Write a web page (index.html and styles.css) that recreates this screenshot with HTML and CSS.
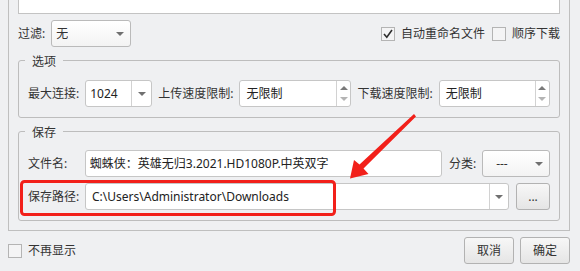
FILE: index.html
```html
<!DOCTYPE html>
<html lang="zh-CN">
<head>
<meta charset="utf-8">
<title>下载设置</title>
<link rel="stylesheet" href="styles.css">
</head>
<body>
<div class="frame">
  <div class="textarea"></div>
  <div class="filter-row">
    <span class="lbl">过滤:</span>
    <div class="select sel-filter"><span class="val">无</span><i class="caret"></i></div>
    <div class="spacer"></div>
    <label class="check"><span class="box"><svg width="12" height="12" viewBox="0 0 12 12"><polyline points="2,6 4.8,9.2 10,2" fill="none" stroke="#2e2e2e" stroke-width="1.6"/></svg></span><span class="lbl">自动重命名文件</span></label>
    <label class="check"><span class="box"></span><span class="lbl">顺序下载</span></label>
  </div>

  <fieldset class="group">
    <legend>选项</legend>
    <div class="row">
      <span class="lbl gap-r">最大连接:</span>
      <div class="combo c-max"><span class="val">1024</span><span class="drop"><i class="caret"></i></span></div>
      <span class="lbl gap-r">上传速度限制:</span>
      <div class="spin s-up"><span class="val">无限制</span><span class="btns"><i class="up"></i><i class="down"></i></span></div>
      <span class="lbl gap-r">下载速度限制:</span>
      <div class="spin s-down"><span class="val">无限制</span><span class="btns"><i class="up"></i><i class="down"></i></span></div>
    </div>
  </fieldset>

  <fieldset class="group g-save">
    <legend>保存</legend>
    <div class="row">
      <span class="lbl fixed">文件名:</span>
      <div class="input i-name"><span class="val">蜘蛛侠：英雄无归3.2021.HD1080P.中英双字</span></div>
      <span class="lbl gap-r">分类:</span>
      <div class="select sel-cat"><span class="val">---</span><i class="caret"></i></div>
    </div>
    <div class="row row2">
      <span class="lbl fixed">保存路径:</span>
      <div class="combo c-path"><span class="val">C:\Users\Administrator\Downloads</span><span class="drop"><i class="caret"></i></span></div>
      <button class="btn btn-dots">...</button>
    </div>
  </fieldset>
</div>

<div class="footer">
  <label class="check"><span class="box"></span><span class="lbl">不再显示</span></label>
  <div class="spacer"></div>
  <button class="btn btn-act">取消</button>
  <button class="btn btn-act">确定</button>
</div>

<svg class="annot" width="580" height="271" viewBox="0 0 580 271">
  <rect x="21.5" y="181.5" width="313" height="33" rx="3" fill="none" stroke="#f2201a" stroke-width="3"/>
  <polygon points="414,114 416,116.5 363.5,168.5 368.5,174 350,178.5 354,160 359.5,164.5" fill="#f2201a"/>
</svg>
</body>
</html>
```

FILE: styles.css
```css
* { box-sizing: border-box; }
html, body { margin: 0; padding: 0; }
body {
  width: 580px;
  height: 271px;
  overflow: hidden;
  position: relative;
  background: #eff0f2;
  font-family: "Noto Sans", "Noto Sans CJK SC", sans-serif;
  font-size: 12px;
  color: #333;
}

.frame {
  margin: 0 10px 0 8px;
  border: 1px solid #bfbfbf;
  border-top: none;
  padding: 0 9px 9px;
}

.textarea {
  height: 14px;
  background: #fff;
  border: 1px solid #c3c3c3;
  border-top: none;
}

.lbl { line-height: 16px; white-space: nowrap; }
.gap-r { margin-right: 6px; }
.fixed { width: 57px; }
.spacer { flex: 1; }
.val { line-height: 16px; white-space: nowrap; overflow: hidden; }

.filter-row {
  display: flex;
  align-items: center;
  height: 27px;
  margin-top: 6px;
}
.filter-row > .lbl:first-child { margin-right: 6px; }

.check { display: flex; align-items: center; }
.check .box {
  width: 14px;
  height: 14px;
  border: 1px solid #b4b4b4;
  background: #f4f4f5;
  display: flex;
  align-items: center;
  justify-content: center;
  margin-right: 6px;
}
.filter-row .check + .check { margin-left: 7px; }

.caret {
  display: block;
  width: 0;
  height: 0;
  border-left: 4px solid transparent;
  border-right: 4px solid transparent;
  border-top: 4px solid #707070;
}

.select {
  height: 27px;
  border: 1px solid #bababa;
  border-radius: 3px;
  background: linear-gradient(#ffffff, #f3f3f3);
  display: flex;
  align-items: center;
  justify-content: space-between;
  padding: 0 6px 0 4px;
}
.sel-filter { width: 80px; }
.sel-cat { width: 68px; padding-left: 13px; }

.group {
  margin: 3px 0 0;
  border: 1px solid #bdbdbd;
  border-radius: 3px;
  padding: 10px 9px 10px;
  min-width: 0;
}
.group legend {
  margin-left: -3px;
  padding: 4px 7px 0;
  line-height: 16px;
}
.g-save { padding-top: 9px; }

.row {
  display: flex;
  align-items: center;
  height: 27px;
}
.row2 { margin-top: 6px; }

.combo, .spin, .input {
  height: 27px;
  border: 1px solid #c6c6c6;
  border-radius: 3px;
  background: #fff;
  display: flex;
  align-items: stretch;
  color: #222;
}
.combo .val, .spin .val, .input .val {
  flex: 1;
  display: flex;
  align-items: center;
  padding-left: 4px;
}
.combo .drop {
  width: 20px;
  border-left: 1px solid #d2d2d2;
  display: flex;
  align-items: center;
  justify-content: center;
}
.c-max { width: 67px; margin-right: 6px; }
.c-path { width: 424px; }
.c-path .val { padding-left: 6px; }
.c-path .drop { width: 19px; }

.spin { width: 112px; margin-right: 6px; }
.spin .val { padding-left: 6px; }
.spin .btns {
  width: 14px;
  border-left: 1px solid #d2d2d2;
  display: flex;
  flex-direction: column;
  align-items: center;
  justify-content: center;
  gap: 7px;
}
.spin .up {
  display: block;
  width: 0; height: 0;
  border-left: 4px solid transparent;
  border-right: 4px solid transparent;
  border-bottom: 4px solid #7a7a7a;
}
.spin .down {
  display: block;
  width: 0; height: 0;
  border-left: 4px solid transparent;
  border-right: 4px solid transparent;
  border-top: 4px solid #b4b4b4;
}
.s-down { width: 111px; margin-right: 0; }

.i-name { width: 358px; margin-right: 7px; }

.btn {
  font: inherit;
  color: #333;
  height: 27px;
  border: 1px solid #b2b2b2;
  border-radius: 3px;
  background: linear-gradient(#f7f7f7, #e5e5e5);
  padding: 0;
  line-height: 16px;
}
.btn-dots { width: 34px; margin-left: 7px; }

.footer {
  display: flex;
  align-items: center;
  height: 27px;
  margin-top: 6px;
  padding: 0 10px 0 8px;
}
.btn-act { width: 50px; }
.btn-act + .btn-act { margin-left: 6px; }

.annot {
  position: absolute;
  left: 0;
  top: 0;
  pointer-events: none;
}
```
